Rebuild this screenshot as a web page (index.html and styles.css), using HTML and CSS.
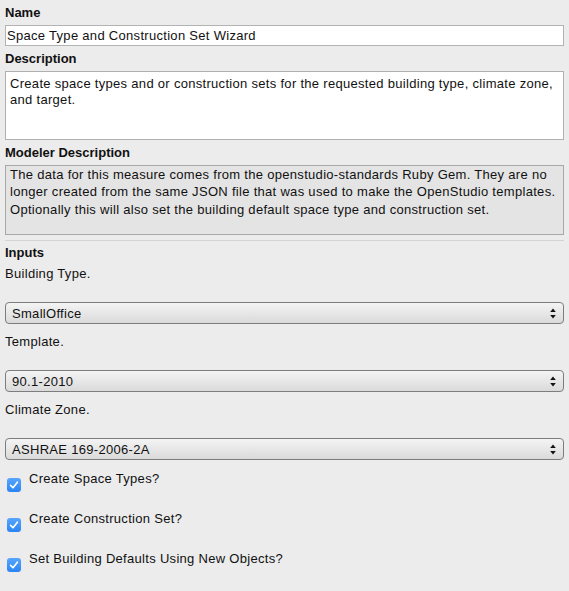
FILE: index.html
```html
<!DOCTYPE html>
<html>
<head>
<meta charset="utf-8">
<link rel="stylesheet" href="styles.css">
</head>
<body>
<div class="page">
  <div class="label first">Name</div>
  <div class="textfield">Space Type and Construction Set Wizard</div>

  <div class="label">Description</div>
  <div class="textarea">Create space types and or construction sets for the requested building type, climate zone,<br>and target.</div>

  <div class="label">Modeler Description</div>
  <div class="textarea readonly">The data for this measure comes from the openstudio-standards Ruby Gem. They are no<br>longer created from the same JSON file that was used to make the OpenStudio templates.<br>Optionally this will also set the building default space type and construction set.</div>

  <div class="sep"></div>

  <div class="label inputs">Inputs</div>

  <div class="group">
    <div class="arg">Building Type.</div>
    <div class="select"><span>SmallOffice</span><svg class="arrows" width="6" height="11" viewBox="0 0 6 11"><path d="M3 0.5 L5.8 4 L0.2 4 Z M0.2 7 L5.8 7 L3 10.5 Z" fill="#111"/></svg></div>
  </div>
  <div class="group">
    <div class="arg">Template.</div>
    <div class="select"><span>90.1-2010</span><svg class="arrows" width="6" height="11" viewBox="0 0 6 11"><path d="M3 0.5 L5.8 4 L0.2 4 Z M0.2 7 L5.8 7 L3 10.5 Z" fill="#111"/></svg></div>
  </div>
  <div class="group">
    <div class="arg">Climate Zone.</div>
    <div class="select"><span>ASHRAE 169-2006-2A</span><svg class="arrows" width="6" height="11" viewBox="0 0 6 11"><path d="M3 0.5 L5.8 4 L0.2 4 Z M0.2 7 L5.8 7 L3 10.5 Z" fill="#111"/></svg></div>
  </div>

  <div class="checks">
    <div class="check-row">
      <span class="checkbox"><svg width="14" height="14" viewBox="0 0 14 14"><path d="M3.6 7.4 L6 9.8 L10.4 4.2" fill="none" stroke="#fff" stroke-width="1.6" stroke-linecap="round" stroke-linejoin="round"/></svg></span>
      <span class="check-label">Create Space Types?</span>
    </div>
    <div class="check-row">
      <span class="checkbox"><svg width="14" height="14" viewBox="0 0 14 14"><path d="M3.6 7.4 L6 9.8 L10.4 4.2" fill="none" stroke="#fff" stroke-width="1.6" stroke-linecap="round" stroke-linejoin="round"/></svg></span>
      <span class="check-label">Create Construction Set?</span>
    </div>
    <div class="check-row">
      <span class="checkbox"><svg width="14" height="14" viewBox="0 0 14 14"><path d="M3.6 7.4 L6 9.8 L10.4 4.2" fill="none" stroke="#fff" stroke-width="1.6" stroke-linecap="round" stroke-linejoin="round"/></svg></span>
      <span class="check-label">Set Building Defaults Using New Objects?</span>
    </div>
  </div>
</div>
</body>
</html>
```

FILE: styles.css
```css
html, body {
  margin: 0;
  padding: 0;
  background: #ececec;
}

body {
  font-family: "Liberation Sans", Arial, sans-serif;
  font-size: 13px;
  letter-spacing: 0.3px;
  color: #111;
}

.page {
  padding: 5px 5px 0 5px;
}

.label {
  font-weight: bold;
  letter-spacing: 0;
  line-height: 16px;
  margin-top: 5px;
  margin-bottom: 4px;
}

.label.first {
  margin-top: 0;
}

.textfield {
  box-sizing: border-box;
  height: 21px;
  line-height: 19px;
  padding: 0 1px;
  background: #fff;
  border: 1px solid #b3b3b3;
  white-space: nowrap;
  overflow: hidden;
}

.textarea {
  box-sizing: border-box;
  height: 69px;
  padding: 4px 4px 0 4px;
  line-height: 16px;
  background: #fff;
  border: 1px solid #b0b0b0;
  white-space: nowrap;
  overflow: hidden;
}

.textarea.readonly {
  height: 70px;
  padding-top: 0;
  line-height: 17.3px;
  background: #e4e4e4;
  border-color: #a8a8a8;
}

.sep {
  height: 1px;
  background: #d4d4d4;
  margin-top: 5px;
}

.label.inputs {
  margin-top: 4px;
  margin-bottom: 0;
}

.group {
  margin-top: 4px;
}

.group + .group {
  margin-top: 9px;
}

.arg {
  line-height: 17px;
  margin-bottom: 20px;
}

.select {
  box-sizing: border-box;
  height: 22px;
  display: flex;
  align-items: center;
  justify-content: space-between;
  padding: 0 7px 0 6px;
  border: 1px solid #7d7d7d;
  border-radius: 4px;
  background: linear-gradient(#f4f4f4, #dadada);
}

.arrows {
  display: block;
}

.checks {
  margin-top: 10px;
}

.check-row {
  display: flex;
  align-items: flex-start;
  height: 40px;
}

.checkbox {
  width: 14px;
  height: 14px;
  margin: 8px 8px 0 2px;
  border-radius: 3px;
  background: linear-gradient(#58a6fd, #2a84f6);
  display: block;
  flex: none;
}

.checkbox svg {
  display: block;
}

.check-label {
  line-height: 17px;
}
```
